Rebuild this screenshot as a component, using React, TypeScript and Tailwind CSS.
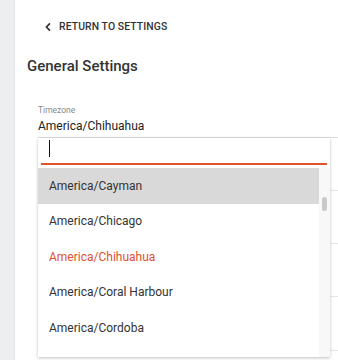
import React from "react";

const items = [
  "America/Cayman",
  "America/Chicago",
  "America/Chihuahua",
  "America/Coral Harbour",
  "America/Cordoba",
];

export default function App() {
  return (
    <div
      className="flex h-[360px] w-[338px] overflow-hidden bg-white text-[#333]"
      style={{ fontFamily: "Roboto, 'Liberation Sans', sans-serif" }}
    >
      <div className="w-[15px] shrink-0 border-r border-[#e3e5e8] bg-[#eceef0]" />
      <div className="relative flex-1">
        <div className="flex h-[52px] items-center pl-[29px] pt-[1px]">
          <svg width="8" height="10" viewBox="0 0 8 10" className="mr-[7px]">
            <path d="M6 1.3 L2.4 5 L6 8.7" fill="none" stroke="#333" strokeWidth="1.7" />
          </svg>
          <span className="text-[10.4px] font-medium tracking-[0.1px] text-[#333]">RETURN TO SETTINGS</span>
        </div>
        <div className="pl-[12px] text-[15px] font-medium leading-[28px] text-[#333]">General Settings</div>
        <div className="ml-[23px] mt-[25px]">
          <div className="text-[8.5px] leading-[11px] text-[#8a8a8a]">Timezone</div>
          <div className="border-b border-[#dcdcdc] pb-[3px] pt-[3px] text-[12px] leading-[15px] text-[#222]">
            America/Chihuahua
          </div>
          <div className="h-[53px] border-b border-[#e6e6e6]" />
          <div className="h-[53px] border-b border-[#e6e6e6]" />
          <div className="h-[53px] border-b border-[#e6e6e6]" />
          <div className="h-[54px] border-b border-[#e6e6e6]" />
        </div>

        <div className="absolute left-[23px] top-[138px] flex h-[219px] w-[292px] flex-col overflow-hidden bg-white shadow-[0_1px_3px_rgba(0,0,0,0.25)]">
          <div className="mx-[3px] h-[27px] shrink-0 border-b-2 border-[#e0512e] pl-[8px] pt-[2px]">
            <div className="h-[17px] w-px bg-[#111]" />
          </div>
          <div className="mt-[3px] flex flex-1 overflow-hidden">
            <div className="flex-1">
              {items.map((it, i) => (
                <div
                  key={it}
                  className={
                    "flex h-[35.5px] items-center pl-[11px] text-[12px] " +
                    (i === 0 ? "bg-[#d9d9d9] text-[#333]" : "") +
                    (i === 2 ? "text-[#e0512e]" : "") +
                    (i !== 0 && i !== 2 ? "text-[#333]" : "")
                  }
                >
                  {it}
                </div>
              ))}
            </div>
            <div className="flex w-[11px] shrink-0 justify-center bg-[#f8f8f8]">
              <div className="mt-[29px] h-[14px] w-[5px] rounded-full bg-[#c9c9c9]" />
            </div>
          </div>
        </div>
      </div>
    </div>
  );
}
